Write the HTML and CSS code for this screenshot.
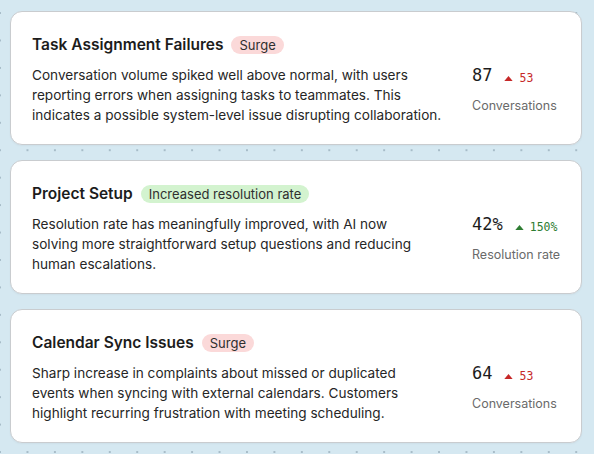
FILE: index.html
```html
<!DOCTYPE html>
<html lang="en">
<head>
<meta charset="utf-8">
<title>Insights</title>
<link rel="stylesheet" href="styles.css">
</head>
<body>
<main class="list">
  <section class="card">
    <div class="head">
      <h2 class="title">Task Assignment Failures</h2>
      <span class="badge badge-red">Surge</span>
    </div>
    <div class="body">
      <p class="desc">Conversation volume spiked well above normal, with users reporting errors when assigning tasks to teammates. This indicates a possible system-level issue disrupting collaboration.</p>
      <div class="metric">
        <div class="metric-top">
          <span class="value">87</span>
          <span class="delta delta-red"><svg class="tri" viewBox="0 0 10 6" width="9" height="5"><polygon points="5,0 10,6 0,6"/></svg>53</span>
        </div>
        <div class="label">Conversations</div>
      </div>
    </div>
  </section>
  <section class="card">
    <div class="head">
      <h2 class="title">Project Setup</h2>
      <span class="badge badge-green">Increased resolution rate</span>
    </div>
    <div class="body">
      <p class="desc desc-pretty">Resolution rate has meaningfully improved, with AI now solving more straightforward setup questions and reducing human escalations.</p>
      <div class="metric">
        <div class="metric-top">
          <span class="value">42%</span>
          <span class="delta delta-green"><svg class="tri" viewBox="0 0 10 6" width="9" height="5"><polygon points="5,0 10,6 0,6"/></svg>150%</span>
        </div>
        <div class="label">Resolution rate</div>
      </div>
    </div>
  </section>
  <section class="card">
    <div class="head">
      <h2 class="title">Calendar Sync Issues</h2>
      <span class="badge badge-red">Surge</span>
    </div>
    <div class="body">
      <p class="desc">Sharp increase in complaints about missed or duplicated events when syncing with external calendars. Customers highlight recurring frustration with meeting scheduling.</p>
      <div class="metric">
        <div class="metric-top">
          <span class="value">64</span>
          <span class="delta delta-red"><svg class="tri" viewBox="0 0 10 6" width="9" height="5"><polygon points="5,0 10,6 0,6"/></svg>53</span>
        </div>
        <div class="label">Conversations</div>
      </div>
    </div>
  </section>
</main>
</body>
</html>
```

FILE: styles.css
```css
html, body {
  margin: 0;
  padding: 0;
}
body {
  width: 594px;
  height: 454px;
  overflow: hidden;
  background-color: #d5e8f1;
  background-image: radial-gradient(circle at center, #a7bcc8 0 1px, transparent 1.4px);
  background-size: 27.45px 27.45px;
  background-position: -13.7px -0.7px;
  font-family: Inter, "Noto Sans", sans-serif;
  color: #1f1f1f;
}
.list {
  display: flex;
  flex-direction: column;
  gap: 15px;
  padding: 11px 12px 0 10px;
}
.card {
  background: #ffffff;
  border: 1px solid #c9cccf;
  border-radius: 12px;
  padding: 23px 21px 19px 21px;
  box-shadow: 0 1px 2px rgba(0, 0, 0, 0.04);
}
.head {
  display: flex;
  align-items: center;
  gap: 8px;
  height: 20px;
}
.title {
  margin: 0;
  font-size: 15.5px;
  font-weight: 600;
  line-height: 20px;
  color: #1c1c1c;
}
.badge {
  display: inline-flex;
  align-items: center;
  height: 18px;
  padding: 0 8px;
  border-radius: 9px;
  font-size: 13px;
  line-height: 18px;
  color: #2f2f2f;
}
.badge-red {
  background: #fbd9d9;
}
.badge-green {
  background: #d3f3cf;
}
.body {
  display: flex;
  align-items: center;
  gap: 20px;
  margin-top: 10px;
}
.desc {
  margin: 0;
  flex: 1;
  min-width: 0;
  font-size: 13.6px;
  line-height: 20px;
  color: #262626;
  text-wrap: balance;
}
.desc-pretty {
  text-wrap: pretty;
}
.metric {
  flex: none;
  width: 88px;
  display: flex;
  flex-direction: column;
  gap: 11px;
  margin-top: -11px;
}
.metric-top {
  display: flex;
  align-items: baseline;
  gap: 12px;
  height: 22px;
}
.value {
  font-family: "DejaVu Sans Mono", "Liberation Mono", monospace;
  font-size: 17px;
  line-height: 22px;
  color: #1c1c1c;
}
.delta {
  display: inline-flex;
  align-items: baseline;
  gap: 6px;
  font-family: "DejaVu Sans Mono", "Liberation Mono", monospace;
  font-size: 11.5px;
  line-height: 14px;
  position: relative;
  top: 1px;
}
.tri {
  display: inline-block;
  fill: currentColor;
  position: relative;
  top: -1px;
}
.delta-red {
  color: #c62828;
}
.delta-green {
  color: #2e7d32;
}
.label {
  font-size: 12.5px;
  line-height: 18px;
  color: #6a6a6a;
  white-space: nowrap;
}
```
